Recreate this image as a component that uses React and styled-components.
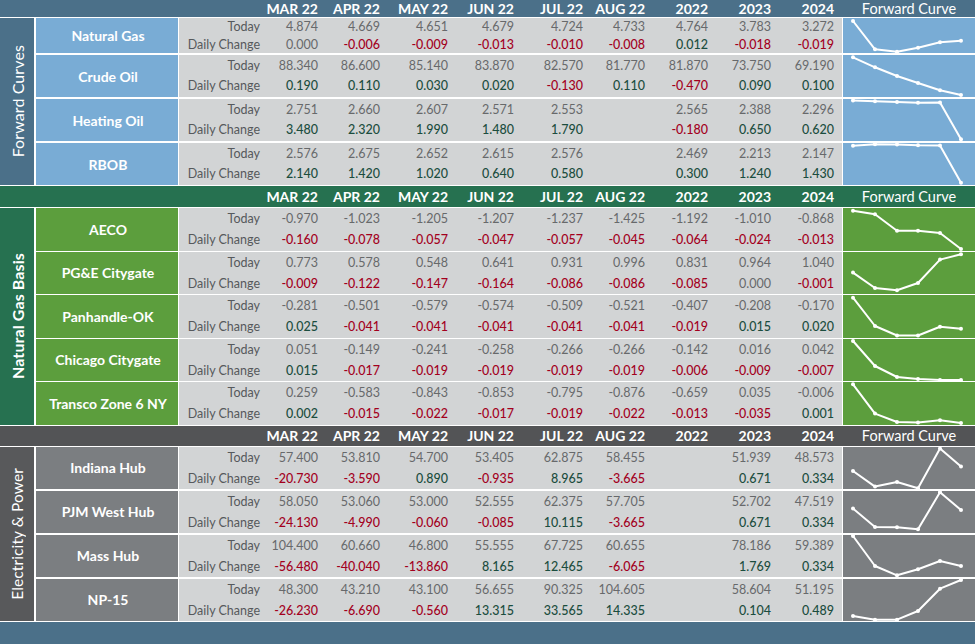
import React from 'react';
import styled, { createGlobalStyle } from 'styled-components';

const GlobalStyle = createGlobalStyle`
  html, body {
    margin: 0;
    padding: 0;
    background: #ffffff;
    font-family: "Lato", "Open Sans", sans-serif;
  }
`;

const TONES = {
  blue: { head: '#4b7089', side: '#4b7089', name: '#79acd5', spark: '#79acd5' },
  green: { head: '#267150', side: '#267150', name: '#5c9e3d', spark: '#5c9e3d' },
  gray: { head: '#535456', side: '#58595b', name: '#7b7e81', spark: '#7b7e81' },
};

const COLS = ['MAR 22', 'APR 22', 'MAY 22', 'JUN 22', 'JUL 22', 'AUG 22', '2022', '2023', '2024'];
const DATA_GRID = '85px 58px 62px 68px 66px 69px 62px 63px 63px 63px';
const SPARK_X = [10, 32, 54, 75, 97, 118];

const SECTIONS = [
  {
    title: 'Forward Curves',
    tone: 'blue',
    headHeight: 17,
    rowGap: 2,
    titleWeight: 400,
    titleSize: 16,
    rows: [
      {
        name: 'Natural Gas', h: 35,
        today: ['4.874', '4.669', '4.651', '4.679', '4.724', '4.733', '4.764', '3.783', '3.272'],
        change: ['0.000', '-0.006', '-0.009', '-0.013', '-0.010', '-0.008', '0.012', '-0.018', '-0.019'],
        curve: [3, 31.3, 33.7, 29.7, 24.3, 22.7],
      },
      {
        name: 'Crude Oil', h: 42, lift: true,
        today: ['88.340', '86.600', '85.140', '83.870', '82.570', '81.770', '81.870', '73.750', '69.190'],
        change: ['0.190', '0.110', '0.030', '0.020', '-0.130', '0.110', '-0.470', '0.090', '0.100'],
        curve: [2.3, 12.3, 21, 28, 35.3, 40],
      },
      {
        name: 'Heating Oil', h: 42, lift: true,
        today: ['2.751', '2.660', '2.607', '2.571', '2.553', '', '2.565', '2.388', '2.296'],
        change: ['3.480', '2.320', '1.990', '1.480', '1.790', '', '-0.180', '0.650', '0.620'],
        curve: [1.5, 2.2, 3, 3.8, 3.5, 40.3],
      },
      {
        name: 'RBOB', h: 42, lift: true,
        today: ['2.576', '2.675', '2.652', '2.615', '2.576', '', '2.469', '2.213', '2.147'],
        change: ['2.140', '1.420', '1.020', '0.640', '0.580', '', '0.300', '1.240', '1.430'],
        curve: [2.7, 1.3, 1.5, 2.3, 2.4, 39.7],
      },
    ],
  },
  {
    title: 'Natural Gas Basis',
    tone: 'green',
    headHeight: 21,
    rowGap: 1,
    titleWeight: 700,
    titleSize: 16,
    rows: [
      {
        name: 'AECO', h: 42.5,
        today: ['-0.970', '-1.023', '-1.205', '-1.207', '-1.237', '-1.425', '-1.192', '-1.010', '-0.868'],
        change: ['-0.160', '-0.078', '-0.057', '-0.047', '-0.057', '-0.045', '-0.064', '-0.024', '-0.013'],
        curve: [2.7, 6.3, 22.7, 22.7, 25, 41],
      },
      {
        name: 'PG&E Citygate', h: 42.5,
        today: ['0.773', '0.578', '0.548', '0.641', '0.931', '0.996', '0.831', '0.964', '1.040'],
        change: ['-0.009', '-0.122', '-0.147', '-0.164', '-0.086', '-0.086', '-0.085', '0.000', '-0.001'],
        curve: [20.6, 36, 38.3, 31, 7.6, 2.3],
      },
      {
        name: 'Panhandle-OK', h: 42.5,
        today: ['-0.281', '-0.501', '-0.579', '-0.574', '-0.509', '-0.521', '-0.407', '-0.208', '-0.170'],
        change: ['0.025', '-0.041', '-0.041', '-0.041', '-0.041', '-0.041', '-0.019', '0.015', '0.020'],
        curve: [2.7, 31, 40.5, 40.5, 31.7, 33.7],
      },
      {
        name: 'Chicago Citygate', h: 42.5,
        today: ['0.051', '-0.149', '-0.241', '-0.258', '-0.266', '-0.266', '-0.142', '0.016', '0.042'],
        change: ['0.015', '-0.017', '-0.019', '-0.019', '-0.019', '-0.019', '-0.006', '-0.009', '-0.007'],
        curve: [2, 27, 38, 40, 41, 41],
      },
      {
        name: 'Transco Zone 6 NY', h: 42.5,
        today: ['0.259', '-0.583', '-0.843', '-0.853', '-0.795', '-0.876', '-0.659', '0.035', '-0.006'],
        change: ['0.002', '-0.015', '-0.022', '-0.017', '-0.019', '-0.022', '-0.013', '-0.035', '0.001'],
        curve: [2.3, 31.6, 40, 40.6, 38.3, 41],
      },
    ],
  },
  {
    title: 'Electricity & Power',
    tone: 'gray',
    headHeight: 20,
    rowGap: 1.5,
    titleWeight: 400,
    titleSize: 15.5,
    rows: [
      {
        name: 'Indiana Hub', h: 42.5,
        today: ['57.400', '53.810', '54.700', '53.405', '62.875', '58.455', '', '51.939', '48.573'],
        change: ['-20.730', '-3.590', '0.890', '-0.935', '8.965', '-3.665', '', '0.671', '0.334'],
        curve: [24, 39.6, 35, 41.3, 1.6, 19.6],
      },
      {
        name: 'PJM West Hub', h: 42.5,
        today: ['58.050', '53.060', '53.000', '52.555', '62.375', '57.705', '', '52.702', '47.519'],
        change: ['-24.130', '-4.990', '-0.060', '-0.085', '10.115', '-3.665', '', '0.671', '0.334'],
        curve: [17.6, 36, 36.3, 38.3, 1.3, 19],
      },
      {
        name: 'Mass Hub', h: 42.5,
        today: ['104.400', '60.660', '46.800', '55.555', '67.725', '60.655', '', '78.186', '59.389'],
        change: ['-56.480', '-40.040', '-13.860', '8.165', '12.465', '-6.065', '', '1.769', '0.334'],
        curve: [1, 31, 40.3, 34.3, 26, 31],
      },
      {
        name: 'NP-15', h: 42.5,
        today: ['48.300', '43.210', '43.100', '56.655', '90.325', '104.605', '', '58.604', '51.195'],
        change: ['-26.230', '-6.690', '-0.560', '13.315', '33.565', '14.335', '', '0.104', '0.489'],
        curve: [37, 40.7, 40.7, 32, 9.7, 1],
      },
    ],
  },
];

const changeTone = (v) => {
  if (v === '' || parseFloat(v) === 0) return 'flat';
  return v.startsWith('-') ? 'down' : 'up';
};

export default function App() {
  return (
    <>
      <GlobalStyle />
      <Page>
        {SECTIONS.map((section) => {
          const tone = TONES[section.tone];
          return (
            <Section key={section.title}>
              <HeaderRow bg={tone.head} h={section.headHeight}>
                <span />
                {COLS.map((c) => (
                  <HeadCell key={c}>{c}</HeadCell>
                ))}
                <CurveHead>Forward Curve</CurveHead>
              </HeaderRow>
              <Body>
                <SideLabel bg={tone.side} weight={section.titleWeight} size={section.titleSize}>
                  <span>{section.title}</span>
                </SideLabel>
                <Rows gap={section.rowGap}>
                  {section.rows.map((row) => (
                    <Row key={row.name} h={row.h}>
                      <NameCell bg={tone.name}>{row.name}</NameCell>
                      <DataCell lift={row.lift}>
                        <RowLabel>Today</RowLabel>
                        {row.today.map((v, i) => (
                          <Value key={'t' + i} kind="flat">{v}</Value>
                        ))}
                        <RowLabel>Daily Change</RowLabel>
                        {row.change.map((v, i) => (
                          <Value key={'c' + i} kind={changeTone(v)}>{v}</Value>
                        ))}
                      </DataCell>
                      <SparkCell bg={tone.spark}>
                        <Spark pts={row.curve} h={row.h} />
                      </SparkCell>
                    </Row>
                  ))}
                </Rows>
              </Body>
            </Section>
          );
        })}
        <Footer />
      </Page>
    </>
  );
}

function Spark({ pts, h }) {
  const points = pts.map((y, i) => `${SPARK_X[i]},${y}`).join(' ');
  return (
    <svg width="132" height={h} viewBox={`0 0 132 ${h}`}>
      <polyline points={points} fill="none" stroke="#ffffff" strokeWidth="2" strokeLinejoin="round" />
      {pts.map((y, i) => (
        <circle key={i} cx={SPARK_X[i]} cy={y} r="2" fill="#ffffff" />
      ))}
    </svg>
  );
}

const Page = styled.div`
  width: 975px;
  height: 644px;
  overflow: hidden;
  display: flex;
  flex-direction: column;
  gap: 1px;
  background: #ffffff;
`;

const Section = styled.div`
  display: flex;
  flex-direction: column;
  gap: 1px;
`;

const HeaderRow = styled.div`
  display: grid;
  grid-template-columns: 264px 58px 62px 68px 66px 69px 62px 63px 63px 63px 1fr;
  align-items: center;
  height: ${(p) => p.h}px;
  background: ${(p) => p.bg};
  color: #ffffff;
`;

const HeadCell = styled.div`
  text-align: right;
  padding-right: 4px;
  font-size: 14px;
  font-weight: 700;
  line-height: 1;
  padding-top: 1px;
`;

const CurveHead = styled.div`
  text-align: center;
  padding-left: 5px;
  font-size: 14.5px;
  font-weight: 400;
  line-height: 1;
  padding-top: 1px;
`;

const Body = styled.div`
  display: flex;
  gap: 2px;
`;

const SideLabel = styled.div`
  width: 34px;
  flex: none;
  background: ${(p) => p.bg};
  color: #ffffff;
  display: flex;
  align-items: center;
  justify-content: center;

  & > span {
    writing-mode: vertical-rl;
    transform: rotate(180deg);
    font-size: ${(p) => p.size}px;
    font-weight: ${(p) => p.weight};
    white-space: nowrap;
    letter-spacing: 0.1px;
  }
`;

const Rows = styled.div`
  flex: 1;
  display: flex;
  flex-direction: column;
  gap: ${(p) => p.gap}px;
`;

const Row = styled.div`
  display: grid;
  grid-template-columns: 142px 663px 132px;
  gap: 1px;
  height: ${(p) => p.h}px;
`;

const NameCell = styled.div`
  background: ${(p) => p.bg};
  color: #ffffff;
  font-size: 14px;
  font-weight: 700;
  display: flex;
  align-items: center;
  justify-content: center;
  padding-left: 2px;
`;

const DataCell = styled.div`
  background: #d2d4d5;
  display: grid;
  grid-template-columns: ${DATA_GRID};
  grid-template-rows: 1fr 1fr;
  align-items: center;
  padding-bottom: ${(p) => (p.lift ? 2 : 0)}px;
  font-size: 12.5px;
`;

const RowLabel = styled.div`
  text-align: right;
  padding-right: 4px;
  color: #56595c;
`;

const VALUE_COLORS = {
  flat: '#67696b',
  up: '#1b4d3e',
  down: '#a3001d',
};

const Value = styled.div`
  text-align: right;
  padding-right: 4px;
  color: ${(p) => VALUE_COLORS[p.kind]};
  font-weight: ${(p) => (p.kind === 'flat' ? 400 : 500)};
`;

const SparkCell = styled.div`
  background: ${(p) => p.bg};
  overflow: hidden;

  & > svg {
    display: block;
  }
`;

const Footer = styled.div`
  flex: 1;
  background: #4b7089;
`;
